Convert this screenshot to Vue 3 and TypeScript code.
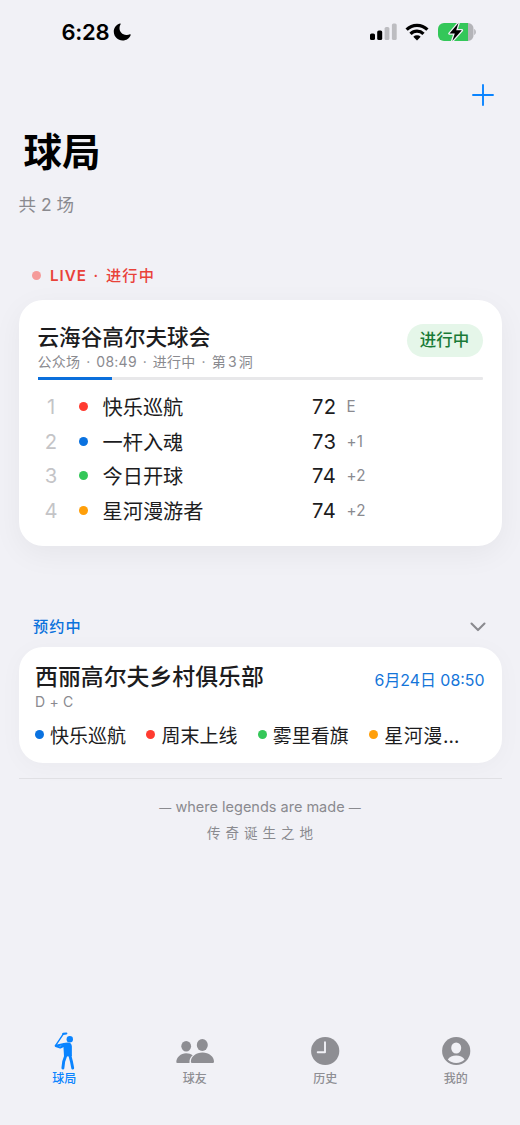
<script setup lang="ts">
interface Player {
  name: string
  tone: string
  score?: number
  diff?: string
}

const leaderboard: Player[] = [
  { name: '快乐巡航', tone: 'red', score: 72, diff: 'E' },
  { name: '一杆入魂', tone: 'blue', score: 73, diff: '+1' },
  { name: '今日开球', tone: 'green', score: 74, diff: '+2' },
  { name: '星河漫游者', tone: 'orange', score: 74, diff: '+2' },
]

const booked: Player[] = [
  { name: '快乐巡航', tone: 'blue' },
  { name: '周末上线', tone: 'red' },
  { name: '雾里看旗', tone: 'green' },
  { name: '星河漫…', tone: 'orange' },
]
</script>

<template>
  <div class="screen">
    <header class="status">
      <div class="clock">
        <span>6:28</span>
        <svg width="19" height="18" viewBox="0 0 19 18"><path d="M7 .6C2.900 1.800 .6 5.200 .8 9c.3 4.900 4 8.400 8.800 8.400 3.800 0 6.900-2.100 8.100-5.500.1-.5-.3-.8-.8-.6-1.200.5-2.300.7-3.600.6C9.200 11.700 6.500 8.900 6.500 5c0-1.400.4-2.600 1.100-3.700.3-.5 0-.9-.6-.7z" fill="#000" /></svg>
      </div>
      <div class="signals">
        <svg class="cell" width="27" height="18" viewBox="0 0 27 18">
          <rect x="0" y="10.500" width="5" height="6.500" rx="1.600" />
          <rect x="7.200" y="7.500" width="5" height="9.500" rx="1.600" />
          <rect x="14.600" y="4" width="4.800" height="13" rx="1.600" fill="#bdbdc1" />
          <rect x="21.900" y="0.500" width="4.800" height="16.500" rx="1.600" fill="#bdbdc1" />
        </svg>
        <svg class="wifi" width="24" height="18" viewBox="0 0 24 18">
          <g fill="none" stroke="#000" stroke-width="3.200">
            <path d="M1.600 6.700a14.800 14.800 0 0 1 20.800 0" />
            <path d="M5.500 10.800a9.300 9.300 0 0 1 13 0" />
          </g>
          <path d="M8.300 13.700a5.400 5.400 0 0 1 7.400 0L12 17.400z" />
        </svg>
        <svg class="battery" width="39" height="20" viewBox="0 0 39 20">
          <path d="M6 1h24v18H6a6 6 0 0 1-6-6V7a6 6 0 0 1 6-6z" fill="#34c759" />
          <path d="M30 1a5.500 5.500 0 0 1 5.500 6v6a5.500 5.500 0 0 1-5.500 6z" fill="#b4b4b8" />
          <path d="M36.200 7c2.200.7 2.200 5.300 0 6z" fill="#b4b4b8" />
          <path d="M20.500 1 11.500 11.500h5.300L14.300 19l9.500-10.700h-5.600z" fill="#000" stroke="#f1f1f6" stroke-width="2.600" stroke-linejoin="round" paint-order="stroke" />
        </svg>
      </div>
    </header>

    <div class="toolbar">
      <svg width="22" height="22" viewBox="0 0 22 22"><path d="M11 1v20M1 11h20" fill="none" stroke="#0a84ff" stroke-width="1.900" stroke-linecap="round" /></svg>
    </div>

    <h1 class="title">球局</h1>
    <p class="count">共 2 场</p>

    <div class="live"><i></i><span><b>LIVE</b> · 进行中</span></div>

    <section class="card active">
      <div class="card-head">
        <div>
          <h2>云海谷高尔夫球会</h2>
          <p class="meta">公众场 · 08:49 · 进行中 · 第<b>3</b>洞</p>
        </div>
        <span class="badge">进行中</span>
      </div>
      <div class="track"><div class="fill"></div></div>
      <ol class="board">
        <li v-for="(p, i) in leaderboard" :key="p.name">
          <span class="rank">{{ i + 1 }}</span>
          <i class="dot" :class="p.tone"></i>
          <span class="name">{{ p.name }}</span>
          <span class="score">{{ p.score }}</span>
          <span class="diff">{{ p.diff }}</span>
        </li>
      </ol>
    </section>

    <div class="booked-head">
      <span>预约中</span>
      <svg width="16" height="10" viewBox="0 0 16 10"><path d="M1.500 1.500 8 8.100l6.500-6.600" fill="none" stroke="#8a8a8f" stroke-width="2.100" stroke-linecap="round" stroke-linejoin="round" /></svg>
    </div>

    <section class="card booked">
      <div class="booked-title">
        <h2>西丽高尔夫乡村俱乐部</h2>
        <time>6月24日 08:50</time>
      </div>
      <p class="course">D + C</p>
      <ul class="players">
        <li v-for="p in booked" :key="p.name"><i class="dot" :class="p.tone"></i><span>{{ p.name }}</span></li>
      </ul>
    </section>

    <footer class="slogan">
      <p class="en"><span class="dash">—</span> where legends are made <span class="dash">—</span></p>
      <p class="zh">传奇诞生之地</p>
    </footer>

    <nav class="tabs">
      <a class="tab on">
        <svg width="40" height="40" viewBox="0 0 40 40" fill="none" stroke="#0a84ff" stroke-linecap="round" stroke-linejoin="round">
          <circle cx="25.800" cy="8.200" r="3.200" fill="#0a84ff" stroke="none" />
          <path d="M18.900 3.600 11.500 14.600" stroke-width="1.400" />
          <path d="M22.300 2.500 19.200 2.900" stroke-width="2.200" />
          <path d="M11.800 14.800 20 12.900M11.800 15l4.500 1.500 4.200-1.900" stroke-width="2.100" />
          <path d="M19.300 12.700c1.200-.8 2.600-1.200 4.300-1.200 2.800 0 4.300 1.500 4.300 4.200v9.500l-7.900.3z" fill="#0a84ff" stroke="none" />
          <path d="M21.700 24.700 19.700 30.500l-.8 6.500M25.900 24.700l1.500 5.600 1.300 6.700" stroke-width="2.900" />
        </svg>
        <span>球局</span>
      </a>
      <a class="tab">
        <svg width="40" height="40" viewBox="0 0 40 40" fill="#8e8e93">
          <ellipse cx="11.200" cy="15.200" rx="4.900" ry="5.300" />
          <path d="M1.300 31.200c0-5 4.500-9 9.800-9 2.800 0 5 .8 6.600 2.100-2.300 1.900-3.500 4.500-3.200 7.600H2.500c-.8 0-1.200-.2-1.200-.7z" />
          <ellipse cx="27.300" cy="14" rx="5.500" ry="6" />
          <path d="M15.900 30.500c0-4.700 5.200-8.900 11.600-8.900s11.500 4.200 11.500 8.900c0 1-.6 1.500-1.700 1.500H17.600c-1.100 0-1.700-.5-1.700-1.500z" />
        </svg>
        <span>球友</span>
      </a>
      <a class="tab">
        <svg width="40" height="40" viewBox="0 0 40 40">
          <circle cx="20.200" cy="20" r="14.100" fill="#8e8e93" />
          <path d="M20 11.300v10h-7.300" fill="none" stroke="#f1f1f6" stroke-width="1.900" stroke-linecap="round" stroke-linejoin="round" />
        </svg>
        <span>历史</span>
      </a>
      <a class="tab">
        <svg width="40" height="40" viewBox="0 0 40 40">
          <circle cx="20.200" cy="20" r="14.100" fill="#8e8e93" />
          <ellipse cx="20.200" cy="17" rx="5" ry="5.500" fill="#f1f1f6" />
          <path d="M11.800 28.400c1.600-2.600 4.700-4 8.400-4s6.800 1.400 8.400 4c-2 2.300-5 3.500-8.400 3.500s-6.400-1.200-8.400-3.500z" fill="#f1f1f6" />
        </svg>
        <span>我的</span>
      </a>
    </nav>
  </div>
</template>

<style>
body {
  background: #f1f1f6;
}
</style>

<style scoped>
* {
  box-sizing: border-box;
}
.screen {
  width: 520px;
  height: 1125px;
  display: flex;
  flex-direction: column;
  overflow: hidden;
  background: #f1f1f6;
  color: #1c1c1e;
  font-family: Inter, "Noto Sans CJK SC", sans-serif;
  white-space: nowrap;
}
h1, h2, p, ol, ul {
  margin: 0;
  padding: 0;
  list-style: none;
}
svg {
  display: block;
  flex: none;
}
.status {
  height: 64px;
  padding: 0 43px 0 61.500px;
  display: flex;
  justify-content: space-between;
  align-items: center;
}
.clock {
  display: flex;
  align-items: center;
  gap: 4px;
  font-size: 22px;
  font-weight: 600;
  letter-spacing: -0.300px;
  color: #000;
}
.signals {
  display: flex;
  align-items: center;
}
.wifi {
  margin-left: 8px;
}
.battery {
  margin-left: 9px;
}
.toolbar {
  height: 62px;
  padding-right: 26px;
  display: flex;
  justify-content: flex-end;
  align-items: center;
}
.title {
  height: 54px;
  padding-left: 23.500px;
  font-size: 38.500px;
  line-height: 53px;
  font-weight: 700;
  color: #000;
}
.count {
  height: 48px;
  padding-left: 18.500px;
  font-size: 17.500px;
  line-height: 49px;
  color: #8a8a8f;
}
.live {
  height: 72px;
  padding: 23px 0 0 31.500px;
  display: flex;
  align-items: center;
  gap: 9px;
  font-size: 15.200px;
  line-height: 26px;
  font-weight: 500;
  letter-spacing: 1.250px;
  word-spacing: 1.200px;
  color: #e9423a;
}
.live b {
  font-weight: 600;
  letter-spacing: 1px;
}
.live i {
  width: 9.500px;
  height: 9.500px;
  border-radius: 50%;
  background: #f59b9a;
}
.card {
  flex: none;
  margin: 0 18.500px;
  border-radius: 24px;
  background: #fff;
}
.card h2 {
  font-weight: 500;
}
.active {
  height: 246px;
  padding: 24px 19px 0;
  box-shadow: 0 8px 30px rgba(0, 0, 0, 0.05);
}
.card-head {
  height: 53px;
  display: flex;
  justify-content: space-between;
  align-items: flex-start;
}
.card-head h2 {
  font-size: 21.600px;
  line-height: 27px;
}
.meta {
  font-size: 14px;
  line-height: 21px;
  letter-spacing: 0.250px;
  word-spacing: 1.700px;
  color: #8a8a8f;
}
.meta b {
  font-weight: 400;
  margin: 0 2px;
}
.badge {
  width: 76px;
  height: 33px;
  border-radius: 17px;
  background: #e5f6e9;
  color: #197a37;
  font-size: 16.500px;
  line-height: 33px;
  font-weight: 500;
  text-align: center;
}
.track {
  height: 3px;
  border-radius: 1px;
  background: #e8e8ea;
}
.fill {
  width: 16.700%;
  height: 3px;
  background: #0a6fdc;
}
.board {
  padding-top: 9.800px;
}
.board li {
  height: 34.400px;
  display: grid;
  grid-template-columns: 27px 28px 210px 35px 60px;
  align-items: center;
  font-size: 20.200px;
}
.rank {
  text-align: center;
  color: #c4c4c7;
}
.dot {
  display: block;
  width: 9px;
  height: 9px;
  border-radius: 50%;
  flex: none;
}
.board .dot {
  justify-self: center;
  margin-left: 9px;
}
.red {
  background: #ff3b30;
}
.blue {
  background: #0a72e0;
}
.green {
  background: #34c759;
}
.orange {
  background: #ff9f0a;
}
.name {
  padding-left: 10px;
}
.score {
  padding-left: 9.500px;
  letter-spacing: 0.400px;
}
.diff {
  padding-left: 9px;
  font-size: 15.200px;
  letter-spacing: 0.300px;
  color: #8a8a8f;
}
.booked-head {
  height: 100.500px;
  padding: 60px 34.500px 0 33px;
  display: flex;
  justify-content: space-between;
  align-items: center;
  font-size: 15.200px;
  font-weight: 500;
  letter-spacing: 1px;
  color: #0a72dc;
}
.booked-head span {
  margin-top: -2px;
}
.booked-head svg {
  margin-top: 1px;
}
.booked {
  height: 116.500px;
  padding: 16.500px 17px 0 16.500px;
  box-shadow: 0 4px 24px rgba(0, 0, 0, 0.03);
}
.booked-title {
  height: 29px;
  display: flex;
  justify-content: space-between;
  align-items: center;
}
.booked-title h2 {
  font-size: 22.900px;
  line-height: 29px;
}
time {
  padding-top: 3px;
  font-size: 15.900px;
  color: #1475d9;
}
.course {
  font-size: 14px;
  line-height: 20px;
  color: #8a8a8f;
  letter-spacing: 0.200px;
}
.players {
  padding-top: 9.500px;
  display: grid;
  grid-template-columns: repeat(4, 111.400px);
}
.players li {
  height: 26px;
  display: flex;
  align-items: center;
  gap: 6px;
  font-size: 19px;
}
.players li:last-child {
  letter-spacing: 0.600px;
}
.slogan {
  margin: 14.500px 18.500px 0;
  padding-top: 16px;
  height: 90px;
  border-top: 1px solid #e0e0e4;
  text-align: center;
  color: #8a8a8f;
}
.en {
  font-size: 14.500px;
  line-height: 24px;
}
.dash {
  font-size: 12px;
}
.zh {
  padding-left: 5px;
  font-size: 13.500px;
  line-height: 26px;
  letter-spacing: 5px;
}
.tabs {
  width: 522px;
  margin: auto 0 38px -1px;
  display: grid;
  grid-template-columns: repeat(4, 1fr);
}
.tab {
  display: flex;
  flex-direction: column;
  align-items: center;
  color: #8e8e93;
  font-size: 12px;
  line-height: 16px;
  font-weight: 500;
}
.tab.on {
  color: #0a84ff;
}
</style>
